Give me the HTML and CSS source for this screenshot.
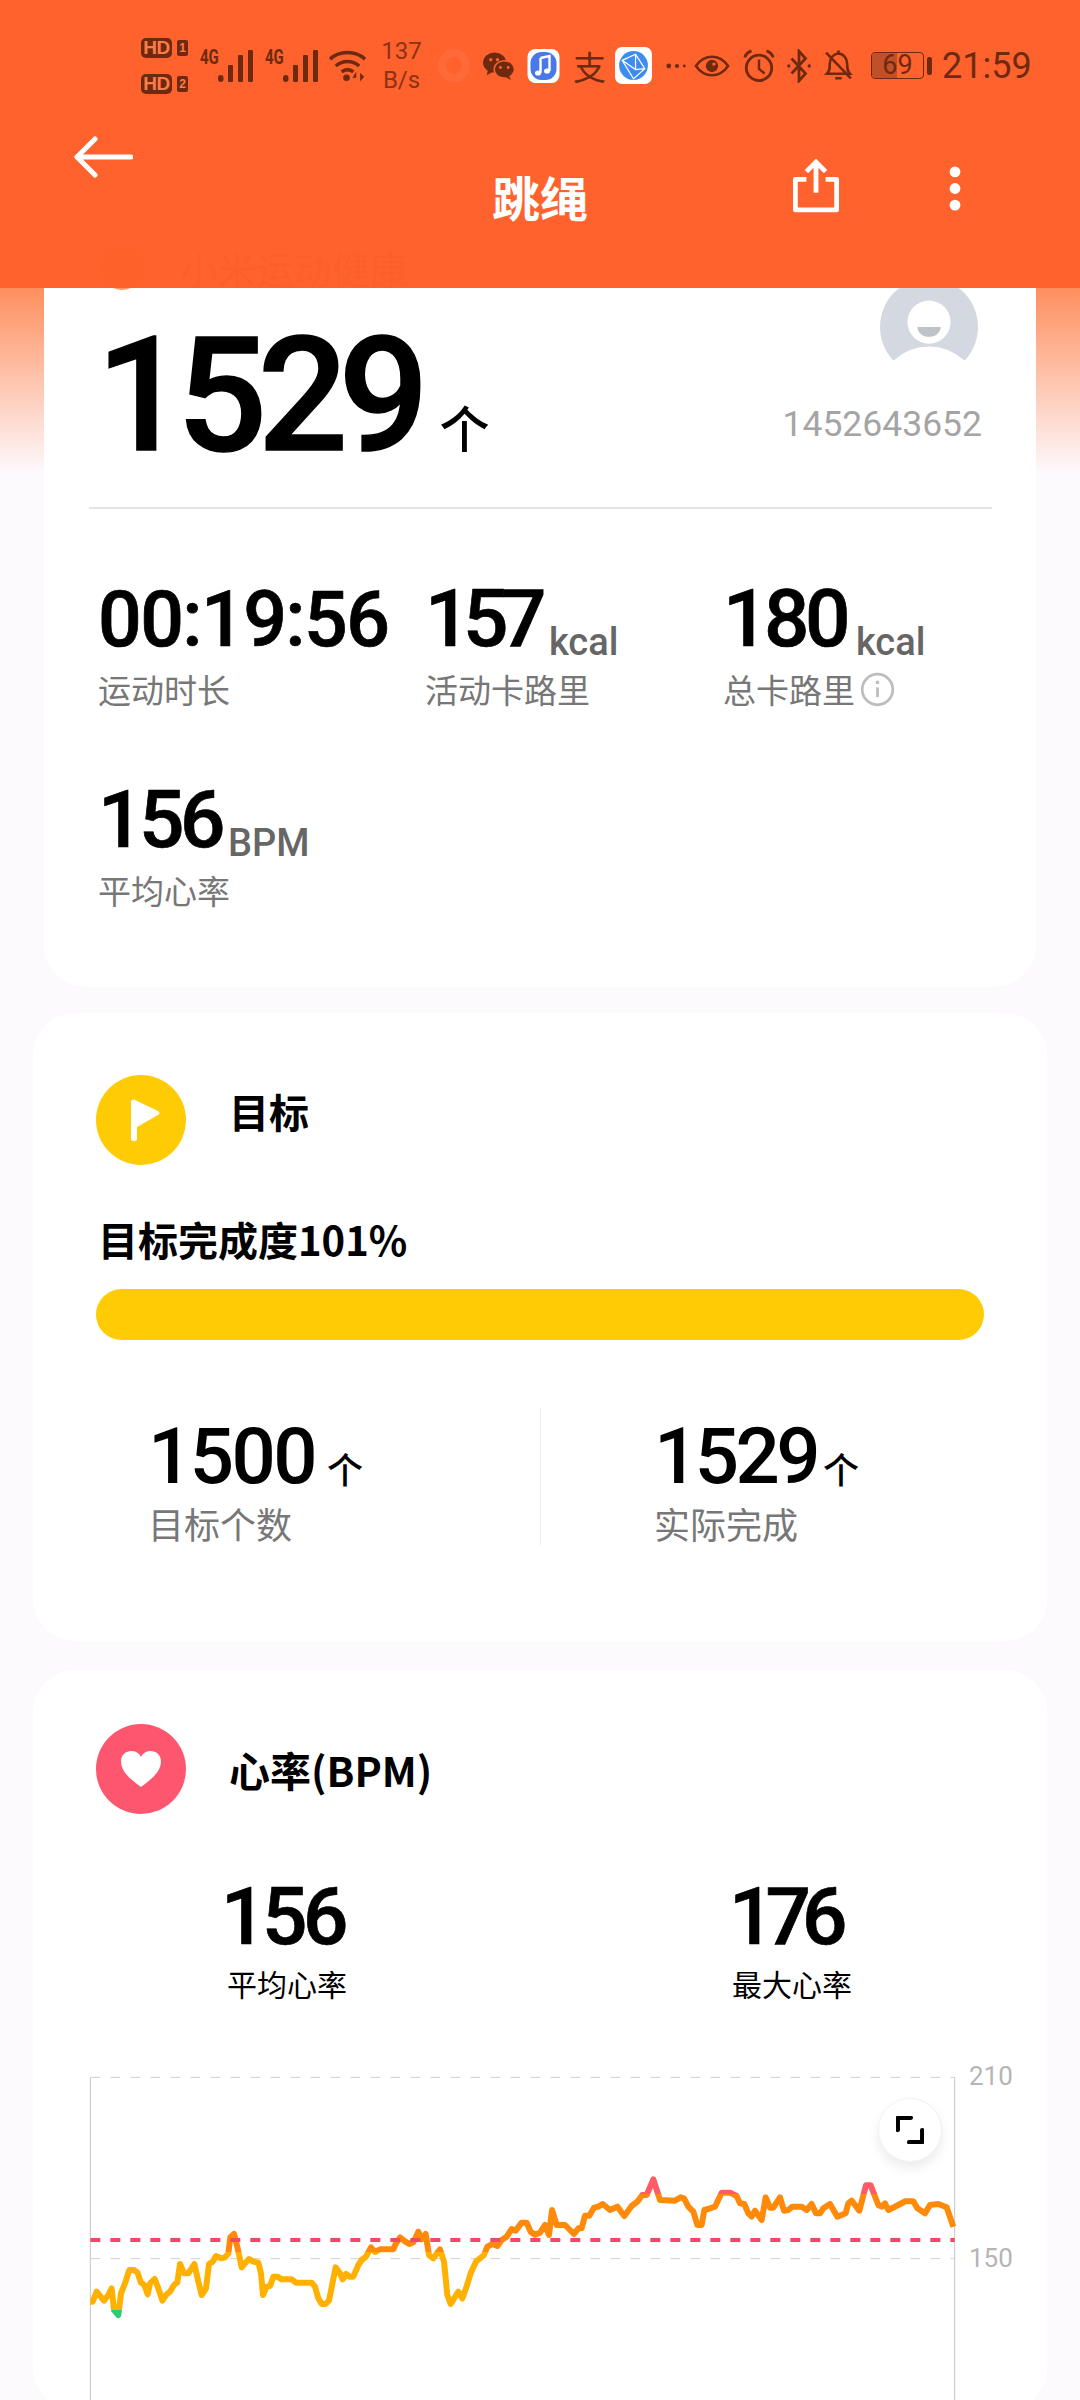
FILE: index.html
```html
<!DOCTYPE html>
<html lang="zh">
<head>
<meta charset="utf-8">
<title>跳绳</title>
<link rel="stylesheet" href="styles.css">
</head>
<body>
<div class="page">
  <div class="fade"></div>

  <header class="top">
    <div class="status">
      <div class="hd-col">
        <div class="hd-row"><span class="hd">HD</span><span class="sim">1</span></div>
        <div class="hd-row"><span class="hd">HD</span><span class="sim">2</span></div>
      </div>
      <div class="net"><span class="g4">4G</span>
        <svg class="bars" viewBox="0 0 35 34"><rect x="0" y="26" width="5.500" height="7" rx="2.700"/><rect x="10" y="16" width="5" height="17" rx="1"/><rect x="20" y="6" width="5" height="27" rx="1"/><rect x="30" y="1" width="5" height="32" rx="1"/></svg>
      </div>
      <div class="net"><span class="g4">4G</span>
        <svg class="bars" viewBox="0 0 35 34"><rect x="0" y="26" width="5.500" height="7" rx="2.700"/><rect x="10" y="16" width="5" height="17" rx="1"/><rect x="20" y="6" width="5" height="27" rx="1"/><rect x="30" y="1" width="5" height="32" rx="1"/></svg>
      </div>
      <svg class="wifi" viewBox="0 0 40 34"><path d="M2 10C12 1 28 1 38 10M8 17c7-6 17-6 24 0M14 23c4-3 8-3 12 0" fill="none" stroke="currentColor" stroke-width="3.600"/><circle cx="19" cy="29" r="3.400" fill="currentColor"/><path d="M29 23l-4 6h4v4zM33 24v9l4-5z" fill="currentColor"/></svg>
      <div class="speed"><span>137</span><span>B/s</span></div>
      <span class="ring"></span>
      <svg class="wechat" viewBox="0 0 34 30"><ellipse cx="13" cy="12" rx="12" ry="10.500" fill="currentColor"/><path d="M6 19l-1 6 7-4z" fill="currentColor"/><ellipse cx="23" cy="19" rx="10.500" ry="9" fill="currentColor" stroke="#ff612b" stroke-width="1.500"/><path d="M28 26l2 4-6-3z" fill="currentColor"/><circle cx="9" cy="9" r="1.700" fill="#ff612b"/><circle cx="16" cy="9" r="1.700" fill="#ff612b"/><circle cx="19" cy="17" r="1.500" fill="#ff612b"/><circle cx="27" cy="17" r="1.500" fill="#ff612b"/></svg>
      <svg class="music" viewBox="0 0 32 34"><rect width="32" height="34" rx="8" fill="#fff"/><rect x="3" y="3" width="26" height="28" rx="11" fill="#4a78e8"/><path d="M13 9l9-2v15" fill="none" stroke="#fff" stroke-width="2.400"/><path d="M13 9v15" stroke="#fff" stroke-width="2.400"/><ellipse cx="10.500" cy="24" rx="3" ry="2.600" fill="#fff"/><ellipse cx="19.500" cy="22" rx="3" ry="2.600" fill="#fff"/></svg>
      <span class="zhi">支</span>
      <svg class="browser" viewBox="0 0 36 36"><rect width="36" height="36" rx="7" fill="#fff"/><circle cx="18" cy="18" r="14" fill="#3f8cf0"/><path d="M7 13L20 7l9 14-11 10zM7 13l13 9 9-1M20 7v15" fill="none" stroke="#fff" stroke-width="1.200"/></svg>
      <svg class="dots" viewBox="0 0 24 8"><circle cx="3" cy="4" r="2.600"/><circle cx="12" cy="4" r="2.300"/><circle cx="20" cy="4" r="1.600"/></svg>
      <svg class="eye" viewBox="0 0 38 26"><path d="M2 13C11 0 27 0 36 13 27 26 11 26 2 13z" fill="none" stroke="currentColor" stroke-width="2.600"/><circle cx="19" cy="13" r="6.500" fill="currentColor"/><circle cx="21" cy="11" r="1.800" fill="#ff612b"/></svg>
      <svg class="alarm" viewBox="0 0 34 36"><circle cx="17" cy="20" r="13.500" fill="none" stroke="currentColor" stroke-width="3"/><path d="M17 11v10l6 5" fill="none" stroke="currentColor" stroke-width="2.600"/><path d="M2 9c1-4 4-6 7-7M32 9c-1-4-4-6-7-7" fill="none" stroke="currentColor" stroke-width="3"/></svg>
      <svg class="bt" viewBox="0 0 28 36"><path d="M6 10l15 16-7 8V2l7 8-15 16" fill="none" stroke="currentColor" stroke-width="3"/><circle cx="3" cy="18" r="1.800" fill="currentColor"/><circle cx="25" cy="18" r="1.800" fill="currentColor"/></svg>
      <svg class="bell" viewBox="0 0 32 36"><path d="M4 27c3-3 3-6 3-11 0-6 4-10 9-11 6 0 10 5 10 11 0 5 0 8 3 11zM13 32h7M15 3h3M3 4l27 28" fill="none" stroke="currentColor" stroke-width="2.800"/></svg>
      <div class="batt"><span class="batt-box"><span class="batt-fill"></span><span class="batt-num">69</span></span><span class="batt-cap"></span></div>
      <span class="clock">21:59</span>
    </div>

    <div class="bar">
      <svg class="back" viewBox="0 0 60 42"><path d="M58 21H4M22 3L4 21l18 18" fill="none" stroke="#fff" stroke-width="5" stroke-linecap="round" stroke-linejoin="round"/></svg>
      <h1 class="title">跳绳</h1>
      <svg class="share" viewBox="0 0 48 56"><path d="M14 21H2.500v32h43V21H34" fill="none" stroke="#fff" stroke-width="5" stroke-linejoin="round"/><path d="M24 35V4M14 13l10-10 10 10" fill="none" stroke="#fff" stroke-width="5"/></svg>
      <svg class="more" viewBox="0 0 12 46"><circle cx="6" cy="6" r="5.500" fill="#fff"/><circle cx="6" cy="23" r="5.500" fill="#fff"/><circle cx="6" cy="40" r="5.500" fill="#fff"/></svg>
    </div>
  </header>

  <main class="feed">
    <section class="card card-main">
      <div class="brand"><span class="brand-dot"></span><span class="brand-name">小米运动健康</span></div>
      <div class="hero">
        <div class="hero-count"><span class="hero-num">1529</span><span class="hero-unit">个</span></div>
        <div class="user">
          <svg class="avatar" viewBox="0 0 100 100"><circle cx="50" cy="50" r="50" fill="#d4d8e0"/><circle cx="50" cy="45" r="22" fill="#fff"/><path d="M38 50h24c-1 7-6 10-12 10s-11-3-12-10z" fill="#bfc2c9"/><path d="M14 84Q30 70 50 70T86 84L100 100H0z" fill="#fff"/></svg>
          <span class="user-id">1452643652</span>
        </div>
      </div>
      <div class="rule"></div>
      <div class="metrics">
        <div class="metric"><div class="m-val"><span class="num-time">00:19:56</span></div><div class="m-label">运动时长</div></div>
        <div class="metric"><div class="m-val"><span class="num num-tight">157</span><span class="m-unit">kcal</span></div><div class="m-label">活动卡路里</div></div>
        <div class="metric"><div class="m-val"><span class="num">180</span><span class="m-unit">kcal</span></div><div class="m-label">总卡路里<svg class="info" viewBox="0 0 32 32"><circle cx="16" cy="16" r="14" fill="none" stroke="#bdbdbd" stroke-width="2.500"/><path d="M16 14v9" stroke="#bdbdbd" stroke-width="2.500"/><circle cx="16" cy="9.500" r="1.700" fill="#bdbdbd"/></svg></div></div>
        <div class="metric"><div class="m-val"><span class="num">156</span><span class="m-unit m-unit-bpm">BPM</span></div><div class="m-label">平均心率</div></div>
      </div>
    </section>

    <section class="card card-goal">
      <div class="card-head">
        <span class="badge badge-yellow"><svg class="flag" viewBox="0 0 30 42"><path d="M0 3c0-2 2-3 4-2l23 11c2 1 2 3 0 4L6 28v12c0 1.500-1 2-3 2s-3-.5-3-2z" fill="#fff"/></svg></span>
        <h2 class="head-goal">目标</h2>
      </div>
      <div class="goal-pct">目标完成度101%</div>
      <div class="progress"></div>
      <div class="goal-row">
        <div class="goal-cell"><div class="goal-val"><span class="goal-num goal-num-wide">1500</span><span class="goal-unit">个</span></div><div class="goal-label">目标个数</div></div>
        <div class="goal-cell goal-right"><div class="goal-val"><span class="goal-num">1529</span><span class="goal-unit">个</span></div><div class="goal-label">实际完成</div></div>
      </div>
    </section>

    <section class="card card-heart">
      <div class="card-head">
        <span class="badge badge-red"><svg class="heart" viewBox="0 0 44 40"><path d="M22 39C10 30 1 22 1 12 1 5 6 1 12 1c4 0 8 2 10 6 2-4 6-6 10-6 6 0 11 4 11 11 0 10-9 18-21 27z" fill="#fff"/></svg></span>
        <h2 class="head-heart">心率(BPM)</h2>
      </div>
      <div class="heart-row">
        <div class="heart-cell"><div class="heart-num">156</div><div class="heart-label">平均心率</div></div>
        <div class="heart-cell"><div class="heart-num heart-num-tight">176</div><div class="heart-label">最大心率</div></div>
      </div>
      <div class="chart">
        <svg class="plot" viewBox="0 0 3060 1080" preserveAspectRatio="none">
          <defs>
            <linearGradient id="zones" gradientUnits="userSpaceOnUse" x1="0" y1="0" x2="0" y2="1080">
              <stop offset="0.4278" stop-color="#ff5c66"/><stop offset="0.4278" stop-color="#ff8a0a"/>
              <stop offset="0.5900" stop-color="#ff8a0a"/><stop offset="0.5900" stop-color="#ffb000"/>
              <stop offset="0.7500" stop-color="#ffb000"/><stop offset="0.7500" stop-color="#2ecc71"/>
            </linearGradient>
          </defs>
          <line class="ax" x1="91" y1="112" x2="91" y2="1080"/>
          <line class="ax" x1="2684" y1="112" x2="2684" y2="1080"/>
          <line class="grid" x1="91" y1="112" x2="2684" y2="112"/>
          <line class="grid" x1="91" y1="656" x2="2684" y2="656"/>
          <polyline class="trace" stroke="url(#zones)" points="91,785 98,785 110,755 122,770 132,782 145,765 155,745 162,810 175,825 183,760 195,730 208,690 222,690 232,697 243,728 253,735 263,763 270,730 284,717 295,745 307,782 318,765 330,755 342,735 352,727 360,672 372,700 385,700 403,672 415,725 425,765 438,745 447,672 458,665 468,648 483,655 495,652 505,640 511,592 522,582 533,625 545,682 555,670 567,657 580,665 595,668 603,700 609,765 620,740 630,738 640,710 652,710 665,718 695,718 708,728 755,728 765,740 775,775 785,792 797,792 807,782 827,682 840,700 848,718 858,702 870,710 880,710 895,675 905,660 918,650 933,622 945,636 960,628 1000,628 1008,610 1020,592 1035,604 1048,612 1060,607 1075,575 1085,598 1097,582 1107,645 1120,655 1140,628 1152,665 1162,765 1172,792 1195,755 1207,775 1218,745 1232,700 1248,665 1272,645 1282,620 1298,612 1312,618 1325,600 1340,590 1355,567 1367,572 1385,548 1400,548 1412,575 1425,584 1440,578 1455,555 1467,585 1476,510 1490,555 1515,555 1542,582 1555,565 1565,565 1575,527 1588,527 1602,503 1615,500 1628,492 1650,510 1672,500 1693,528 1715,498 1732,485 1747,465 1760,465 1780,418 1800,480 1845,482 1862,472 1872,475 1885,500 1900,515 1912,555 1925,555 1933,510 1950,505 1965,500 1985,458 2010,458 2030,468 2040,490 2053,492 2065,520 2075,530 2085,512 2105,540 2117,472 2130,503 2140,503 2160,472 2172,512 2185,510 2197,500 2225,500 2240,510 2255,492 2268,520 2280,520 2290,505 2310,492 2332,530 2357,520 2365,490 2375,482 2398,512 2418,436 2432,436 2455,495 2465,500 2475,490 2485,510 2515,495 2535,484 2560,484 2572,505 2595,520 2610,495 2635,492 2660,502 2680,560"/>
          <line class="limit" x1="91" y1="600" x2="2684" y2="600"/>
        </svg>
        <span class="tick tick-top">210</span>
        <span class="tick tick-mid">150</span>
        <button class="expand" type="button" aria-label="全屏"><svg viewBox="0 0 30 30"><path d="M2 15V2h14M28 15v13H14" fill="none" stroke="#000" stroke-width="4.500" stroke-linejoin="round" stroke-linecap="round"/></svg></button>
      </div>
    </section>
  </main>
</div>
</body>
</html>
```
FILE: styles.css
```css
* { box-sizing: border-box; }
html, body { margin: 0; padding: 0; }
body {
  width: 1080px;
  height: 2400px;
  overflow: hidden;
  background: #fdfafe;
  font-family: Roboto, "Noto Sans CJK SC", sans-serif;
  color: #000;
}
h1, h2 { margin: 0; font: inherit; }
.page { position: relative; width: 1080px; height: 2400px; overflow: hidden; }
.fade {
  position: absolute; left: 0; top: 288px; width: 100%; height: 186px;
  background: linear-gradient(#fe8f5e, #fdfafe);
}

/* overlay header */
.top {
  position: absolute; left: 0; top: 0; width: 100%; height: 288px; z-index: 5;
  background: rgba(255, 96, 42, 0.985);
  color: #6e2a10;
}
.status { display: flex; align-items: center; padding: 31px 0 0 141px; height: 100px; }
.hd-col { display: flex; flex-direction: column; gap: 16px; width: 47px; }
.hd-row { display: flex; align-items: center; gap: 5px; }
.hd {
  width: 31px; height: 20px; border-radius: 5px; background: #6e2a10; color: #ff7a45;
  font: 700 19px/20px "Liberation Sans", sans-serif; text-align: center; letter-spacing: -0.5px;
}
.sim {
  width: 11px; height: 16px; border-radius: 2px; background: #6e2a10; color: #ff7a45;
  font: 700 12px/16px "Liberation Sans", sans-serif; text-align: center;
}
.net { position: relative; display: flex; align-items: flex-end; width: 53px; height: 34px; margin-left: 12px; flex: none; }
.g4 { position: absolute; left: 0; top: -2px; font: 700 20px/20px Roboto, sans-serif; transform: scaleX(.75); transform-origin: left; }
.bars { width: 35px; height: 34px; margin-left: 18px; fill: currentColor; }
.wifi { width: 39px; height: 34px; margin-left: 10px; flex: none; }
.speed { display: flex; flex-direction: column; margin-left: 16px; font-size: 24px; line-height: 29px; width: 37px; color: #8c3314; align-items: center; flex: none; }
.ring { width: 32px; height: 33px; margin-left: 18px; border-radius: 50%; border: 8px solid #ff6a38; flex: none; }
.wechat { width: 33px; height: 29px; margin-left: 12px; flex: none; }
.music { width: 33px; height: 34px; margin-left: 12px; flex: none; }
.zhi { margin-left: 13px; font: 400 33px/48px "Noto Sans CJK SC", sans-serif; flex: none; }
.browser { width: 37px; height: 37px; margin-left: 9px; flex: none; }
.dots { width: 22px; height: 8px; margin-left: 14px; fill: currentColor; flex: none; }
.eye { width: 36px; height: 26px; margin-left: 6px; flex: none; }
.alarm { width: 32px; height: 34px; margin-left: 13px; flex: none; }
.bt { width: 26px; height: 34px; margin-left: 11px; flex: none; }
.bell { width: 30px; height: 33px; margin-left: 11px; flex: none; }
.batt { display: flex; align-items: center; gap: 3px; margin-left: 18px; flex: none; }
.batt-box { position: relative; display: block; width: 53px; height: 27px; border: 1.500px solid #6e2a10; border-radius: 4px; overflow: hidden; }
.batt-fill { position: absolute; left: 0; top: 0; bottom: 0; width: 25px; background: #c0502a; }
.batt-num { position: absolute; inset: 0; text-align: center; font-size: 27px; line-height: 25px; }
.batt-cap { width: 5px; height: 18px; border-radius: 2px; background: #6e2a10; }
.clock { margin-left: 10px; font-size: 36px; line-height: 40px; color: #6e2a10; flex: none; }

.bar { position: relative; height: 188px; }
.back { position: absolute; left: 73px; top: 36px; width: 60px; height: 42px; }
.title { position: absolute; left: 0; right: 0; top: 67px; text-align: center; color: #fff; font: 700 48px/58px "Noto Sans CJK SC", sans-serif; }
.share { position: absolute; left: 793px; top: 59px; width: 46px; height: 54px; }
.more { position: absolute; left: 949px; top: 66px; width: 12px; height: 45px; }

/* feed */
.feed { position: relative; display: flex; flex-direction: column; align-items: center; padding-top: 180px; }
.card { background: #fff; border-radius: 42px; flex: none; }
.card-main { width: 992px; height: 807px; padding: 58px 44px 0 44px; }
.card-goal { width: 1014px; height: 628px; margin-top: 26px; padding: 62px 63px 0 63px; }
.card-heart { width: 1014px; height: 740px; margin-top: 29px; padding: 54px 0 0 0; }

.brand { display: flex; align-items: center; gap: 36px; height: 60px; margin-left: 12px; }
.brand-dot { width: 44px; height: 44px; border-radius: 50%; background: #ff9a6a; }
.brand-name { font: 400 38px/44px "Noto Sans CJK SC", sans-serif; color: #666; }

.hero { display: flex; justify-content: space-between; height: 209px; }
.hero-count { display: flex; align-items: flex-start; margin-top: 23px; }
.hero-num { font: 500 159px/150px Roboto, sans-serif; letter-spacing: -9.500px; margin-left: 8px; -webkit-text-stroke: 1.500px #000; }
.hero-unit { font: 500 50px/60px "Noto Sans CJK SC", sans-serif; margin: 75px 0 0 20px; }
.user { display: flex; flex-direction: column; align-items: flex-end; margin-top: -20px; padding-right: 10px; }
.avatar { width: 98px; height: 98px; margin-right: 4px; }
.user-id { font: 400 35.500px/42px Roboto, sans-serif; color: #a4a4a4; margin-top: 27px; }

.rule { height: 2px; width: 903px; margin-left: 1px; background: #e4e4e4; }

.metrics { display: grid; grid-template-columns: 327px 298px 1fr; row-gap: 67px; margin: 66px 0 0 10px; }
.m-val { display: flex; align-items: flex-end; height: 84px; }
.num-time { font: 500 77px/77px Roboto, sans-serif; letter-spacing: -1.600px; -webkit-text-stroke: .7px #000; }
.num { font: 500 80px/80px Roboto, sans-serif; letter-spacing: -4.500px; -webkit-text-stroke: .7px #000; }
.num-tight { letter-spacing: -7.500px; }
.m-unit { font: 500 38px/36px Roboto, sans-serif; color: #666; margin-left: 10px; margin-bottom: -1px; }
.m-unit-bpm { margin-left: 7px; }
.m-label { display: flex; align-items: center; font: 400 33px/40px "Noto Sans CJK SC", sans-serif; color: #777; margin-top: 10px; }
.info { width: 35px; height: 35px; margin-left: 5px; }

.card-head { display: flex; align-items: flex-start; gap: 45px; }
.badge { display: flex; align-items: center; justify-content: center; width: 90px; height: 90px; border-radius: 50%; flex: none; }
.badge-yellow { background: #ffcb05; }
.badge-red { background: #ff5670; margin-left: 63px; }
.flag { width: 30px; height: 42px; margin-left: 9px; }
.heart { width: 44px; height: 38px; }
.head-goal { font: 700 40px/52px "Noto Sans CJK SC", sans-serif; margin: 10px 0 0 -2px; }
.head-heart { font: 700 41px/52px "Noto Sans CJK SC", sans-serif; margin: 19px 0 0 -2px; }

.goal-pct { font: 700 40px/50px "Noto Sans CJK SC", sans-serif; margin: 49px 0 0 2px; }
.progress { width: 888px; height: 51px; border-radius: 26px; background: #ffcb05; margin-top: 25px; }
.goal-row { display: grid; grid-template-columns: 444px 444px; margin-top: 68px; height: 138px; }
.goal-cell { padding-left: 52px; height: 137px; }
.goal-right { border-left: 1px solid #ececec; padding-left: 113px; }
.goal-val { display: flex; align-items: flex-end; height: 85px; padding-top: 6px; }
.goal-num { font: 500 78px/72px Roboto, sans-serif; letter-spacing: -3.600px; }
.goal-num-wide { letter-spacing: -2.600px; }
.goal-unit { font: 500 36px/44px "Noto Sans CJK SC", sans-serif; margin: 0 0 3px 12px; }
.goal-right .goal-unit { margin-left: 6px; }
.goal-label { font: 400 36px/42px "Noto Sans CJK SC", sans-serif; color: #777; margin-top: 9px; }

.heart-row { display: grid; grid-template-columns: 505px 1fr; margin: 63px 0 0 194px; }
.heart-num { font: 500 80px/80px Roboto, sans-serif; letter-spacing: -4.500px; margin-left: -6px; -webkit-text-stroke: .7px #000; }
.heart-num-tight { letter-spacing: -9px; margin-left: -3px; }
.heart-label { font: 400 30px/40px "Noto Sans CJK SC", sans-serif; margin-top: 6px; }

.chart { position: relative; width: 1020px; height: 360px; margin: 37px 0 0 27px; }
.plot { display: block; width: 1020px; height: 360px; }
.ax { stroke: #c4c4c4; stroke-width: 3; }
.grid { stroke: #cfcfcf; stroke-width: 3; stroke-dasharray: 30 30; }
.trace { fill: none; stroke-width: 18; stroke-linejoin: round; stroke-linecap: butt; }
.limit { stroke: #f4476a; stroke-width: 12; stroke-dasharray: 30 30; }
.tick { position: absolute; left: 909px; font: 400 26px/28px Roboto, sans-serif; color: #b5b5b5; }
.tick-top { top: 22px; }
.tick-mid { top: 204px; }
.expand { position: absolute; left: 818px; top: 58px; width: 64px; height: 64px; padding: 0; display: flex; align-items: center; justify-content: center; background: #fff; border: 1px solid #f2f2f2; border-radius: 50%; box-shadow: 0 6px 12px rgba(0,0,0,.08); }
.expand svg { width: 28px; height: 28px; }
```
